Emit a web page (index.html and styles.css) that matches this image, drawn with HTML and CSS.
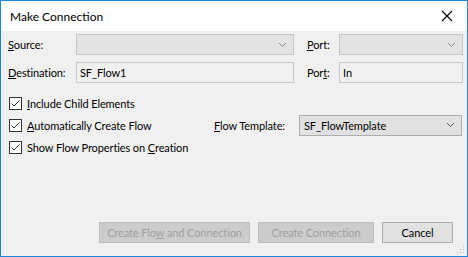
FILE: index.html
```html
<!DOCTYPE html>
<html>
<head>
<meta charset="utf-8">
<link rel="stylesheet" href="styles.css">
</head>
<body>
<div class="window">
  <div class="titlebar">
    <span class="title">Make Connection</span>
    <span class="close"><svg width="12" height="12" viewBox="0 0 12 12"><path d="M1 1 L11 11 M11 1 L1 11" stroke="#000" stroke-width="1.1" fill="none"/></svg></span>
  </div>
  <div class="content">
    <div class="grid">
      <label class="lbl"><u>S</u>ource:</label>
      <div class="combo disabled"><span class="val"></span><svg class="chev" width="9" height="6" viewBox="0 0 9 6"><polyline points="1,1 4.5,4.5 8,1" stroke="#8a8a8a" fill="none" stroke-width="1"/></svg></div>
      <label class="lbl port"><u>P</u>ort:</label>
      <div class="combo disabled"><span class="val"></span><svg class="chev" width="9" height="6" viewBox="0 0 9 6"><polyline points="1,1 4.5,4.5 8,1" stroke="#8a8a8a" fill="none" stroke-width="1"/></svg></div>

      <label class="lbl"><u>D</u>estination:</label>
      <div class="edit">SF_Flow1</div>
      <label class="lbl port">Por<u>t</u>:</label>
      <div class="edit">In</div>
    </div>

    <div class="checks">
      <div class="row">
        <span class="cb"><svg width="13" height="13" viewBox="0 0 13 13"><path d="M2.5 6.5 L5 9 L10.5 3.5" stroke="#333" stroke-width="1" fill="none"/></svg></span>
        <span class="cbl"><u>I</u>nclude Child Elements</span>
      </div>
      <div class="row">
        <span class="cb"><svg width="13" height="13" viewBox="0 0 13 13"><path d="M2.5 6.5 L5 9 L10.5 3.5" stroke="#333" stroke-width="1" fill="none"/></svg></span>
        <span class="cbl"><u>A</u>utomatically Create Flow</span>
        <span class="ftlbl"><u>F</u>low Template:</span>
        <div class="combo enabled ft"><span class="val">SF_FlowTemplate</span><svg class="chev" width="9" height="6" viewBox="0 0 9 6"><polyline points="1,1 4.5,4.5 8,1" stroke="#555" fill="none" stroke-width="1"/></svg></div>
      </div>
      <div class="row">
        <span class="cb"><svg width="13" height="13" viewBox="0 0 13 13"><path d="M2.5 6.5 L5 9 L10.5 3.5" stroke="#333" stroke-width="1" fill="none"/></svg></span>
        <span class="cbl">Show Flow Properties on <u>C</u>reation</span>
      </div>
    </div>

    <div class="buttons">
      <button class="btn dis b1">Create Flo<u>w</u> and Connection</button>
      <button class="btn dis b2">Create Connection</button>
      <button class="btn b3">Cancel</button>
    </div>
    <svg class="grip" width="8" height="8" viewBox="0 0 8 8">
      <rect x="6" y="0" width="1" height="1" fill="#b8b8b8"/>
      <rect x="3" y="3" width="1" height="1" fill="#b8b8b8"/>
      <rect x="6" y="3" width="1" height="1" fill="#b8b8b8"/>
      <rect x="0" y="6" width="1" height="1" fill="#b8b8b8"/>
      <rect x="3" y="6" width="1" height="1" fill="#b8b8b8"/>
      <rect x="6" y="6" width="1" height="1" fill="#b8b8b8"/>
    </svg>
  </div>
</div>
</body>
</html>
```

FILE: styles.css
```css
* { box-sizing: border-box; }
html, body { margin: 0; padding: 0; }
body {
  font-family: "Lato", "Noto Sans", sans-serif;
  font-size: 11px;
  letter-spacing: -0.1px;
  color: #000;
  background: #fff;
}
u { text-decoration: underline; text-underline-offset: 1px; }
.window {
  width: 468px;
  height: 257px;
  border: 1px solid #1c86d8;
  display: flex;
  flex-direction: column;
  background: #f0f0f0;
}
.titlebar {
  height: 30px;
  background: #fff;
  display: flex;
  align-items: center;
  padding-left: 9px;
  padding-right: 14px;
  flex: none;
}
.title { font-size: 12px; letter-spacing: 0; color: #000; flex: 1; padding-top: 1px; }
.close { display: flex; align-items: center; }
.content {
  flex: 1;
  position: relative;
  display: flex;
  flex-direction: column;
  padding: 3px 4px 13px 7px;
}
.grid {
  display: grid;
  grid-template-columns: 68px 218px 45px 124px;
  grid-template-rows: 21px 21px;
  row-gap: 7px;
  align-items: center;
}
.lbl { line-height: 21px; white-space: nowrap; }
.lbl.port { padding-left: 13px; }
.combo {
  height: 21px;
  display: flex;
  align-items: center;
  padding: 0 6px 0 4px;
}
.combo .val { flex: 1; white-space: nowrap; }
.combo.disabled { background: #e3e3e3; border: 1px solid #c8c8c8; }
.combo.enabled { background: #e1e1e1; border: 1px solid #adadad; }
.edit {
  height: 21px;
  background: #f0f0f0;
  border: 1px solid #c8c8c8;
  padding: 0 3px;
  line-height: 19px;
  white-space: nowrap;
}
.checks {
  margin-top: 9px;
  display: flex;
  flex-direction: column;
}
.row {
  height: 22px;
  display: flex;
  align-items: center;
  white-space: nowrap;
}
.cb {
  width: 13px;
  height: 13px;
  border: 1px solid #333;
  background: #fff;
  display: flex;
  margin-left: 1px;
  position: relative;
  flex: none;
}
.cb svg { position: absolute; left: -1px; top: -1px; }
.cbl { margin-left: 5px; width: 187px; flex: none; }
.ftlbl { width: 85px; flex: none; }
.combo.ft { width: 163px; flex: none; }
.buttons {
  margin-top: auto;
  display: flex;
  justify-content: flex-end;
  gap: 8px;
  padding-right: 10px;
}
.btn {
  font-family: inherit;
  font-size: 11px;
  letter-spacing: -0.1px;
  height: 21px;
  padding: 0;
  background: #e1e1e1;
  border: 1px solid #adadad;
  color: #000;
  white-space: nowrap;
}
.btn.dis { background: #cccccc; border-color: #bfbfbf; color: #a0a0a0; }
.b1 { width: 151px; }
.b2 { width: 116px; }
.b3 { width: 71px; }
.grip { position: absolute; right: 2px; bottom: 2px; }
```
